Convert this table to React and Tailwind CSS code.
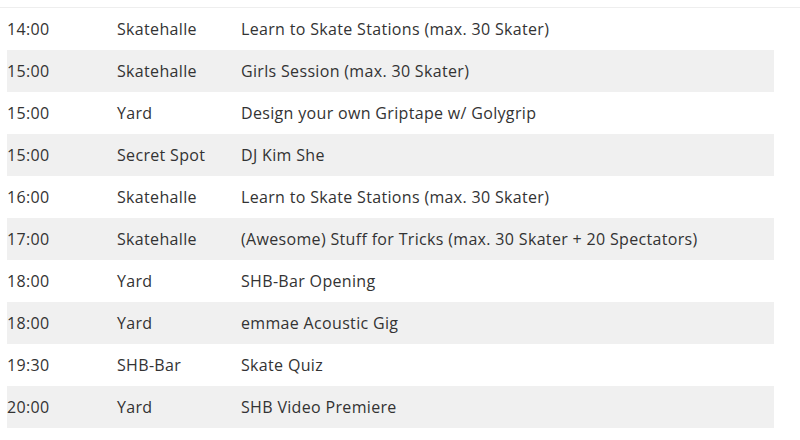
const ROWS = [
  ['14:00', 'Skatehalle', 'Learn to Skate Stations (max. 30 Skater)'],
  ['15:00', 'Skatehalle', 'Girls Session (max. 30 Skater)'],
  ['15:00', 'Yard', 'Design your own Griptape w/ Golygrip'],
  ['15:00', 'Secret Spot', 'DJ Kim She'],
  ['16:00', 'Skatehalle', 'Learn to Skate Stations (max. 30 Skater)'],
  ['17:00', 'Skatehalle', '(Awesome) Stuff for Tricks (max. 30 Skater + 20 Spectators)'],
  ['18:00', 'Yard', 'SHB-Bar Opening'],
  ['18:00', 'Yard', 'emmae Acoustic Gig'],
  ['19:30', 'SHB-Bar', 'Skate Quiz'],
  ['20:00', 'Yard', 'SHB Video Premiere'],
];

export default function App() {
  return (
    <div className="w-[800px] h-[440px] bg-white overflow-hidden font-['Open_Sans',sans-serif] text-[16px] tracking-[0.33px] text-[#333]">
      <div className="h-[8px] border-b border-[#eeeeee]" />
      <div className="ml-[7px] w-[767px]">
        {ROWS.map(([time, place, title], i) => (
          <div
            key={i}
            className={`grid grid-cols-[110px_124px_1fr] items-center h-[42px] ${
              i % 2 === 1 ? 'bg-[#f0f0f0]' : 'bg-white'
            }`}
          >
            <span>{time}</span>
            <span>{place}</span>
            <span>{title}</span>
          </div>
        ))}
      </div>
    </div>
  );
}
